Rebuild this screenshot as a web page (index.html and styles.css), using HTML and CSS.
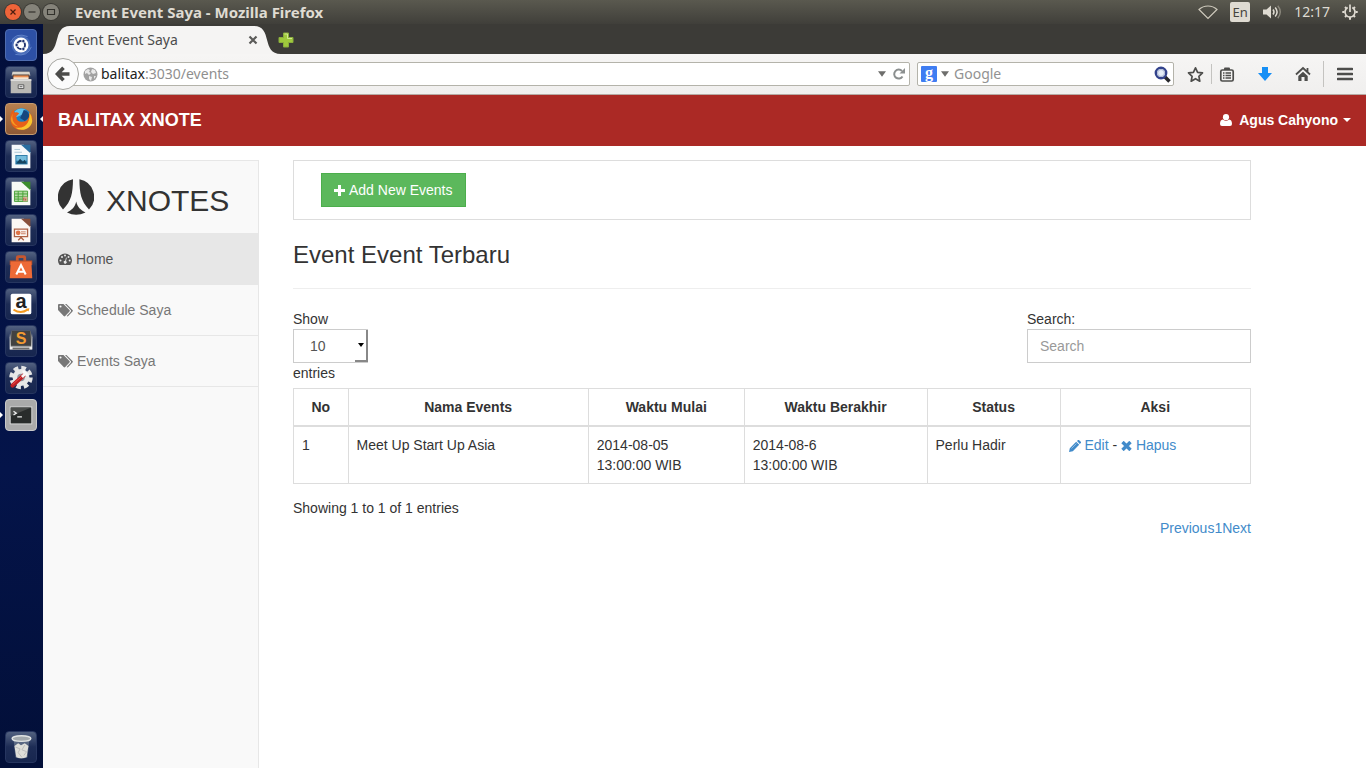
FILE: index.html
```html
<!DOCTYPE html>
<html lang="id">
<head>
<meta charset="utf-8">
<title>Event Event Saya</title>
<link rel="stylesheet" href="styles.css">
</head>
<body>
<div class="desktop">
  <header class="titlebar">
    <div class="window-controls">
      <button class="wc wc-close" aria-label="Close"><svg width="16" height="16" viewBox="0 0 16 16"><path d="M5.500 5.500l5 5m0-5l-5 5" stroke="#4a1d10" stroke-width="1.200"/></svg></button>
      <button class="wc" aria-label="Minimize"><svg width="16" height="16" viewBox="0 0 16 16"><path d="M4.500 8h7" stroke="#32312c" stroke-width="1.200"/></svg></button>
      <button class="wc" aria-label="Maximize"><svg width="16" height="16" viewBox="0 0 16 16"><path d="M4.500 5.500h7v5h-7z" fill="none" stroke="#32312c" stroke-width="1.100"/></svg></button>
    </div>
    <span class="window-title">Event Event Saya - Mozilla Firefox</span>
    <div class="indicators">
      <svg width="20" height="16" viewBox="0 0 20 16"><path d="M1 5.500C6 .8 14 .8 19 5.500L10 14.500z" fill="none" stroke="#cfcabd" stroke-width="1.200"/></svg>
      <span class="lang">En</span>
      <svg width="20" height="16" viewBox="0 0 20 16"><path d="M1 5.500h3.500L9 1.500v13l-4.500-4H1z" fill="#dfdbd2"/><path d="M11 5.500q2 2.500 0 5M13.200 3.500q3.800 4.500 0 9" fill="none" stroke="#dfdbd2" stroke-width="1.500"/><path d="M15.800 1.800q5 6.200 0 12.400" fill="none" stroke="#8a877c" stroke-width="1.400"/></svg>
      <span class="clock">12:17</span>
      <svg width="16" height="16" viewBox="0 0 16 16"><g fill="none" stroke="#dfdbd2"><path d="M5.700 3.600a5 5 0 1 0 4.600 0M8 .5V8" stroke-width="1.700"/><path d="M3 3l1.300 1.300M13 3l-1.300 1.300M.3 8h2.200M13.500 8h2.200M3 13l1.300-1.300M13 13l-1.300-1.300M8 13.300v2.400" stroke-width="2"/></g></svg>
    </div>
  </header>

  <div class="workspace">
    <nav class="launcher" aria-label="Launcher">
      <button class="app app-dash" aria-label="Dash"><svg viewBox="0 0 32 32"><circle cx="16" cy="16" r="10" fill="#8fb3e6" opacity=".3"/><path d="M5 13Q10 2 23 7M27 18Q23 29 10 26" fill="none" stroke="#9cbcf0" opacity=".5"/><circle cx="16" cy="16" r="8" fill="#fff"/><circle cx="16" cy="16" r="4.300" fill="none" stroke="#1f3370" stroke-width="2"/><g fill="#1f3370" stroke="#fff" stroke-width=".8"><circle cx="11.300" cy="16" r="1.800"/><circle cx="18.500" cy="11.800" r="1.800"/><circle cx="18.500" cy="20.200" r="1.800"/></g></svg></button>
      <button class="app" aria-label="Files"><svg viewBox="0 0 32 32"><path d="M7 5h18v5H7z" fill="#706b65"/><path d="M7 5h18l1 4H6z" fill="#d9d5cc"/><path d="M7 8h18v5H7z" fill="#513f36"/><path d="M8 9h16v3H8z" fill="#eb8f53"/><path d="M8 11h16v2H8z" fill="#f5e5d0"/><path d="M5 13h22v15H5z" fill="#bab9b5"/><path d="M5 13h22v2H5z" fill="#dedddb"/><path d="M13 19h6v4h-6z" fill="#eee" stroke="#555"/><path d="M14.500 21h3" stroke="#555"/></svg></button>
      <button class="app app-firefox" aria-label="Firefox"><svg viewBox="0 0 32 32"><circle cx="16.500" cy="15" r="10.500" fill="#1d7fc2"/><path d="M9 8q5-5 12-2l-3 5-7 3z" fill="#5ec2ed"/><path d="M19 6q6 2 6 8l-5 4-5-3 2-4z" fill="#15477f"/><path d="M5 10q1-3 3-4l1 3q3-1 5 1l-3 3q0 6 6 6 8 0 8-10 4 4 3 8c-1 13-21 15-23 1-1-4 0-7 0-8z" fill="#e76018"/><path d="M25 9q3 4 3 9c-1 9-12 12-18 7 12 2 16-7 15-16z" fill="#f9c52d"/><path d="M7 10q-2 9 6 14-7-1-8-8z" fill="#f49a22"/></svg><span class="run run-left"></span><span class="run run-right"></span></button>
      <button class="app" aria-label="Writer"><svg viewBox="0 0 32 32"><path d="M6 4h13l7 8v17H6z" fill="#f5f8fa"/><path d="M16 4h10v9z" fill="#286d9f"/><path d="M9 9h6M9 12h8" stroke="#a9c4d3"/><path d="M10 15h13v10H10z" fill="#2677a5"/><path d="M11 16h11v5H11z" fill="#75bddd"/><path d="M11 24l4-5 3 3 2-2 2 4z" fill="#17445f"/></svg></button>
      <button class="app" aria-label="Calc"><svg viewBox="0 0 32 32"><path d="M6 4h13l7 8v17H6z" fill="#f7faf5"/><path d="M16 4h10v9z" fill="#3c8d2d"/><path d="M9 14h14v11H9z" fill="#b6dca6"/><path d="M9 14h14v11H9zM9 17h14M9 20h14M9 22.500h14M13 14v11M18 14v11" fill="none" stroke="#45a034"/><path d="M18 20h5v5h-5z" fill="#d6b498"/><path d="M19 24v-3M21 24v-2" stroke="#a95335"/></svg></button>
      <button class="app" aria-label="Impress"><svg viewBox="0 0 32 32"><path d="M6 4h13l7 8v17H6z" fill="#fbf7f4"/><path d="M16 4h10v9z" fill="#89503c"/><path d="M9 15h14v8H9zM16 23v2M13 27l3-3 3 3" fill="none" stroke="#ae6044" stroke-width="1.400"/><circle cx="13" cy="19" r="2.500" fill="#df7448"/><path d="M16 18h5M16 20h5" stroke="#c87557"/></svg></button>
      <button class="app" aria-label="Software"><svg viewBox="0 0 32 32"><path d="M12 10V6q0-1 1-1h6q1 0 1 1v4" fill="none" stroke="#c7572f" stroke-width="3"/><path d="M4 9h24v5H4z" fill="#b34f2a"/><path d="M5 10h22l1 18H4z" fill="#ed6a37"/><path d="M11 24l5-10 5 10M12.500 21h7" fill="none" stroke="#fff" stroke-width="2.200"/></svg></button>
      <button class="app" aria-label="Amazon"><svg viewBox="0 0 32 32"><rect x="5" y="5" width="22" height="22" rx="2" fill="#fff"/><path d="M8 22q8 5 15 0" fill="none" stroke="#f59b22" stroke-width="2"/><path d="M21 21l4-.5-1 3.500z" fill="#f59b22"/></svg><span class="glyph glyph-a">a</span></button>
      <button class="app" aria-label="Sublime Text"><svg viewBox="0 0 32 32"><path d="M4 12l2-7h20l2 7v13H4z" fill="#898a8b"/><path d="M6 5h20l1 16H5z" fill="#414242"/><path d="M4 8l1 14h22l1-14v17H4z" fill="#ededed"/><path d="M7 23h18v2H7z" fill="#6c6c6c"/></svg><span class="glyph glyph-s">S</span></button>
      <button class="app" aria-label="System Settings"><svg viewBox="0 0 32 32"><circle cx="16" cy="15.500" r="10" fill="none" stroke="#e4e5e6" stroke-width="5" stroke-dasharray="4.800 3.050"/><circle cx="16" cy="15.500" r="9" fill="#e7e8e8"/><circle cx="16" cy="15.500" r="4" fill="#8e929c"/><path d="M7 24L19 13" stroke="#bf2024" stroke-width="4.500" stroke-linecap="round"/><path d="M17 15l5-5M19 8q0 4 5 5" fill="none" stroke="#f8f8f8" stroke-width="3"/><path d="M7 23l9-8" stroke="#ef5050"/></svg></button>
      <button class="app app-terminal" aria-label="Terminal"><svg viewBox="0 0 32 32"><path d="M4 7h24v19H4z" fill="#ddd"/><path d="M5 8h22v17H5z" fill="#292c2b"/><path d="M5 8h22l-22 9z" fill="#4b4d4b"/><path d="M8 12l3 2-3 2M12 18h5" fill="none" stroke="#eee" stroke-width="1.400"/></svg><span class="run run-left"></span></button>
      <button class="app app-trash" aria-label="Trash"><svg viewBox="0 0 32 32"><path d="M8 7l2 20q6 3 13 0l2-20z" fill="#8a95a6" opacity=".5"/><ellipse cx="16.500" cy="7" rx="10" ry="3" fill="#a3a9ad" stroke="#e0e3e3" stroke-width="1.500"/><path d="M9 15l4-3 3 2 4-2 4 3-1 5-1 7q-6 2-11 0l-1-6z" fill="#deded9"/><path d="M10 16l5 2-2 4 4 5m3-13l-3 5 5 2-3 4" fill="none" stroke="#bbb"/></svg></button>
    </nav>

    <div class="browser">
      <div class="tabstrip">
        <div class="tab">
          <svg class="tab-shape" viewBox="0 0 238 28" preserveAspectRatio="none"><path d="M0 28C20 28 8 0 27 0H211C230 0 218 28 238 28z" fill="#f5f4f3"/></svg>
          <span class="tab-title">Event Event Saya</span>
          <button class="plain tab-close" aria-label="Close tab"><svg width="10" height="10" viewBox="0 0 10 10"><path d="M1.500 1.500l7 7m0-7l-7 7" stroke="#5b5b59" stroke-width="2.200"/></svg></button>
        </div>
        <button class="plain new-tab" aria-label="New tab"><svg width="16" height="16" viewBox="0 0 16 16"><path d="M5.500 1h5v4.500H15v5h-4.500V15h-5v-4.500H1v-5h4.500z" fill="#9fc93c" stroke="#8aae3c"/><path d="M6.500 2h3v4.500H14" fill="none" stroke="#d2ea8e"/></svg></button>
      </div>
      <div class="toolbar">
        <button class="back" aria-label="Back"><svg width="18" height="16" viewBox="0 0 18 16"><path d="M9.500 1.800L3.500 8l6 6.200M4 8h11.500" fill="none" stroke="#4c4c4a" stroke-width="3.600"/></svg></button>
        <div class="urlbar">
          <svg width="15" height="15" viewBox="0 0 15 15"><circle cx="7.500" cy="7.500" r="7" fill="#a2a2a2"/><path d="M2 4l3-2 2 1-1 2 2 1-2 2-2-2-2 1zM9 2l3 1 1 3-3 1-2-2zM6 9l3 1-1 4-2-2zM11 9h2l-2 3z" fill="#e9e9e9"/></svg>
          <div class="url"><b>balitax</b>:3030/events</div>
          <svg width="8" height="6" viewBox="0 0 9 6"><path d="M0 0h9L4.500 6z" fill="#6e6e6c"/></svg>
          <button class="plain" aria-label="Reload"><svg width="12" height="12" viewBox="0 0 12 12"><path d="M9.500 8.500A4.500 4.500 0 1 1 9 3" fill="none" stroke="#8b8f8f" stroke-width="2"/><path d="M6.500 5.500H12V0z" fill="#8b8f8f"/></svg></button>
        </div>
        <form class="searchbar">
          <span class="google">g</span>
          <svg width="8" height="6" viewBox="0 0 9 6"><path d="M0 0h9L4.500 6z" fill="#6e6e6c"/></svg>
          <input class="search-field" type="text" placeholder="Google" aria-label="Google">
          <button class="plain" type="button" aria-label="Search web"><svg width="17" height="17" viewBox="0 0 17 17"><path d="M11 11l4.500 4.500" stroke="#27272b" stroke-width="3.500"/><circle cx="7" cy="7" r="5.200" fill="#e5edf7" stroke="#33438c" stroke-width="2.400"/><circle cx="7" cy="7" r="3.500" fill="none" stroke="#aab5d2"/></svg></button>
        </form>
        <div class="tools">
          <button class="plain" aria-label="Bookmark"><svg width="17" height="17" viewBox="0 0 17 17"><path d="M8.500 1.800l2.100 4.500 4.900.6-3.600 3.400.9 4.900-4.300-2.500-4.300 2.500.9-4.900-3.600-3.400 4.900-.6z" fill="none" stroke="#4d4d4b" stroke-width="1.700" stroke-linejoin="round"/></svg></button>
          <span class="rule rule-short"></span>
          <button class="plain" aria-label="Bookmarks list"><svg width="16" height="17" viewBox="0 0 16 17"><rect x="1.800" y="4" width="12.400" height="11" rx="1.500" fill="none" stroke="#4d4d4b" stroke-width="1.700"/><path d="M5 4V2.500Q5 1.500 6 1.500h4q1 0 1 1V4z" fill="#4d4d4b"/><path d="M4 7h1.500M6.500 7H12M4 9.500h1.500M6.500 9.500H12M4 12h1.500M6.500 12H12" stroke="#4d4d4b" stroke-width="1.300"/></svg></button>
          <button class="plain tool-download" aria-label="Downloads"><svg width="16" height="16" viewBox="0 0 16 16"><path d="M5 1h6v6h4l-7 8-7-8h4z" fill="#168ff5"/></svg></button>
          <button class="plain tool-home" aria-label="Home"><svg width="16" height="16" viewBox="0 0 16 16"><path d="M1 8.500L8 2l7 6.500M12.500 2v4" fill="none" stroke="#4d4d4b" stroke-width="1.800"/><path d="M3.300 10L8 5.800l4.700 4.200v5H9.500v-4h-3v4H3.300z" fill="#4d4d4b"/></svg></button>
          <span class="rule"></span>
          <button class="plain" aria-label="Menu"><svg width="16" height="14" viewBox="0 0 16 14"><path d="M1 2h14M1 7h14M1 12h14" stroke="#4d4d4b" stroke-width="2.600" stroke-linecap="round"/></svg></button>
        </div>
      </div>

      <div class="page">
        <header class="navbar">
          <a class="brand" href="#">BALITAX XNOTE</a>
          <button class="user">
            <svg width="12" height="12" viewBox="0 0 12 12"><circle cx="6" cy="3.200" r="3.100" fill="#fff"/><path d="M2.800 5.600q3.200 2.800 6.400 0Q12 6 12 10q0 2-2 2H2q-2 0-2-2 0-4 2.800-4.400z" fill="#fff"/></svg>
            <span>Agus Cahyono</span>
            <svg width="8" height="4" viewBox="0 0 8 4"><path d="M0 0h8L4 4z" fill="#fff"/></svg>
          </button>
        </header>
        <div class="columns">
          <aside class="sidebar">
            <h2 class="logo">
              <svg width="36" height="36" viewBox="0 0 36 36"><path d="M15 .2C14.800 14 13.500 22 5 30.500A18 18 0 0 1 15 .2zM21.400.2C21.500 14 23 22 31 30.500A18 18 0 0 0 21.400.2zM18.200 22.500C17 28 14 31 9 33.500q9 4.500 18.500 0C22.500 31 19.500 28 18.200 22.500z" fill="#333"/></svg>
              <span>XNOTES</span>
            </h2>
            <a class="side-link active" href="#"><svg width="14" height="12" viewBox="0 0 14 12"><path d="M1.300 11.500A7 7 0 1 1 12.700 11.500q-.2.500-.8.500H2.100q-.6 0-.8-.5z" fill="#555"/><g fill="#e7e7e7"><circle cx="2.500" cy="7.500" r="1"/><circle cx="4" cy="4" r="1"/><circle cx="7" cy="2.500" r="1"/><circle cx="10.500" cy="4" r="1"/><circle cx="11.700" cy="7.500" r="1"/><path d="M8 4.500l.8.200-.8 3.200A1.500 1.500 0 1 1 7.200 7.700z"/></g></svg><span>Home</span></a>
            <a class="side-link" href="#"><svg width="15" height="13" viewBox="0 0 15 13"><path d="M0 1q0-1 1-1h4.500l6 6q.7.700 0 1.400L7.200 12q-.8.800-1.500 0L0 6zM2.500 1.500a1 1 0 1 0 .1 2 1 1 0 0 0-.1-2z" fill="#777" fill-rule="evenodd"/><path d="M7 0h1.500l6 6q.7.700 0 1.400L10.200 12q-.8.800-1.500 0l4-4.300q.7-1 0-1.700z" fill="#777"/></svg><span>Schedule Saya</span></a>
            <a class="side-link" href="#"><svg width="15" height="13" viewBox="0 0 15 13"><path d="M0 1q0-1 1-1h4.500l6 6q.7.700 0 1.400L7.200 12q-.8.800-1.500 0L0 6zM2.500 1.500a1 1 0 1 0 .1 2 1 1 0 0 0-.1-2z" fill="#777" fill-rule="evenodd"/><path d="M7 0h1.500l6 6q.7.700 0 1.400L10.200 12q-.8.800-1.500 0l4-4.300q.7-1 0-1.700z" fill="#777"/></svg><span>Events Saya</span></a>
          </aside>
          <main class="content">
            <div class="actions">
              <button class="add"><svg width="11" height="11" viewBox="0 0 11 11"><path d="M5.500 0v11M0 5.500h11" stroke="#fff" stroke-width="3"/></svg><span>Add New Events</span></button>
            </div>
            <h3 class="heading">Event Event Terbaru</h3>
            <div class="filters">
              <div class="length">
                <label for="length">Show</label>
                <div class="select-wrap">
                  <select id="length" class="field length-select"><option>10</option><option>25</option></select>
                  <span class="select-arrow"><svg width="6" height="4" viewBox="0 0 6 4"><path d="M0 0h6L3 4z" fill="#000"/></svg></span>
                </div>
                <span>entries</span>
              </div>
              <div class="filter">
                <label for="filter">Search:</label>
                <input id="filter" class="field" type="text" placeholder="Search">
              </div>
            </div>
            <table class="events">
              <colgroup><col class="c-no"><col class="c-name"><col class="c-start"><col class="c-end"><col class="c-status"><col></colgroup>
              <thead><tr><th>No</th><th>Nama Events</th><th>Waktu Mulai</th><th>Waktu Berakhir</th><th>Status</th><th>Aksi</th></tr></thead>
              <tbody><tr>
                <td>1</td><td>Meet Up Start Up Asia</td><td>2014-08-05<br>13:00:00 WIB</td><td>2014-08-6<br>13:00:00 WIB</td><td>Perlu Hadir</td>
                <td><a href="#"><svg width="12" height="12" viewBox="0 0 12 12"><path d="M0 12l.8-3.800 6.400-6.400 3 3L3.800 11.200zM8 1l1-1q.6-.4 1.200.2l1.600 1.600q.5.600 0 1.200l-1 1z" fill="#428bca"/><path d="M2.500 8.500L7.500 3.500" stroke="#a5cae9" stroke-width=".8"/></svg> Edit</a> - <a href="#"><svg class="times" width="11" height="10" viewBox="0 0 11 10"><path d="M1.500 1l8 8m0-8l-8 8" stroke="#428bca" stroke-width="3.400"/></svg> Hapus</a></td>
              </tr></tbody>
            </table>
            <div class="info">Showing 1 to 1 of 1 entries</div>
            <nav class="pager" aria-label="Pages"><a href="#">Previous</a><a href="#">1</a><a href="#">Next</a></nav>
          </main>
        </div>
      </div>
    </div>
  </div>
</div>
</body>
</html>
```
FILE: styles.css
```css
* { box-sizing: border-box; }
html, body { margin: 0; height: 100%; }
body { font: 14px/20px "Liberation Sans", Arial, sans-serif; color: #333; overflow: hidden; }
a { color: #428bca; text-decoration: none; }
button { font: inherit; cursor: pointer; }
svg { flex: none; }
.desktop { min-height: 100vh; display: flex; flex-direction: column; background: #fff; }

.titlebar { height: 24px; display: flex; align-items: center; padding: 0 8px 0 5px; background: linear-gradient(#5a594f, #403f3a); color: #dfdbd2; font-family: "Noto Sans", "Open Sans", sans-serif; }
.window-controls { display: flex; gap: 3px; }
.wc { width: 16px; height: 16px; padding: 0; border: 0; border-radius: 50%; background: #85837a; display: flex; box-shadow: 0 0 0 1px #3a3934; }
.wc-close { background: #ee6439; }
.window-title { flex: 1; margin-left: 16px; font-size: 15px; font-weight: bold; }
.indicators { display: flex; align-items: center; gap: 12px; font-size: 14px; }
.lang { background: #dfdbd2; color: #45443e; border-radius: 2px; width: 20px; line-height: 20px; text-align: center; font-size: 13px; }

.workspace { flex: 1; display: flex; }
.launcher { width: 43px; padding: 5px; display: flex; flex-direction: column; gap: 5px; background: linear-gradient(#030f3b, #04144a 60%, #020f38); }
.app { position: relative; width: 32px; height: 32px; padding: 0; border: 1px solid #26355f; border-radius: 4px; background: linear-gradient(#526180, #1d2c55 50%, #17264f); }
.app svg { display: block; width: 30px; height: 30px; }
.app-dash { background: #2d50a5; border-color: #4e6cb0; }
.app-firefox { background: linear-gradient(#b7804f, #8e5936); border-color: #c49a6f; }
.app-terminal { background: #aaa; border-color: #c9c9c9; }
.app-trash { margin-top: auto; }
.glyph { position: absolute; inset: 0; text-align: center; font-weight: bold; }
.glyph-a { color: #222; font-size: 20px; line-height: 24px; }
.glyph-s { color: #f39b32; font-size: 16px; line-height: 25px; }
.run { position: absolute; top: 12px; border: 3px solid transparent; }
.run-left { left: -6px; border-left-color: #fff; border-right: 0; }
.run-right { right: -7px; border-right-color: #fff; border-left: 0; }

.browser { flex: 1; min-width: 0; display: flex; flex-direction: column; }
.plain { border: 0; padding: 0; background: none; display: flex; }
.tabstrip { height: 30px; background: #3c3b37; display: flex; align-items: flex-end; font-family: "Noto Sans", "Open Sans", sans-serif; }
.tab { position: relative; width: 238px; height: 28px; padding: 0 23px 0 24px; display: flex; align-items: center; justify-content: space-between; color: #4c4c4c; }
.tab-shape { position: absolute; inset: 0; width: 100%; height: 100%; }
.tab-title, .tab-close { position: relative; }
.new-tab { align-self: center; margin: 2px 0 0 -3px; }

.toolbar { height: 41px; padding: 0 13px 0 4px; display: flex; align-items: center; background: linear-gradient(#f6f5f4, #f0efee); border-bottom: 1px solid #b6aaa4; font-family: "Noto Sans", "Open Sans", sans-serif; }
.back { position: relative; z-index: 1; width: 32px; height: 32px; padding: 0; border: 1px solid #a5a5a0; border-radius: 50%; background: #fbfbfb; display: flex; align-items: center; justify-content: center; }
.urlbar, .searchbar { height: 24px; display: flex; align-items: center; background: #fff; border: 1px solid #b4b3aa; border-radius: 2px; }
.urlbar { flex: 1; margin-left: -8px; padding: 0 4px 0 11px; gap: 3px; color: #8f8f8f; }
.url { flex: 1; margin-right: 4px; }
.url b { color: #222; font-weight: normal; }
.urlbar .plain { margin-left: 4px; }
.searchbar { width: 257px; margin-left: 7px; padding: 0 2px 0 3px; gap: 4px; }
.google { width: 16px; height: 16px; background: #3f7df2; color: #fff; border-radius: 1px; text-align: center; font: bold 16px/13px "Liberation Serif", serif; }
.search-field { flex: 1; min-width: 0; border: 0; padding: 0 0 0 1px; outline: 0; font: inherit; background: none; }
.search-field::placeholder { color: #929292; opacity: 1; }
.tools { display: flex; align-items: center; margin-left: 13px; gap: 7px; }
.rule { width: 1px; height: 26px; background: #c4c3c0; margin: 0 6px 0 5px; }
.rule-short { height: 20px; margin: 0; }
.tool-download, .tool-home { margin-left: 15px; }

.page { flex: 1; display: flex; flex-direction: column; background: #fff; }
.navbar { height: 51px; padding: 0 15px 2px; display: flex; align-items: center; justify-content: space-between; background: #ab2925; font-weight: bold; }
.brand { color: #fff; font-size: 18px; }
.user { display: flex; align-items: center; gap: 5px; border: 0; padding: 0; background: none; color: #fff; }
.user span { margin-left: 2px; }
.columns { flex: 1; display: flex; margin-top: 14px; }
.sidebar { width: 216px; background: #f9f9f9; border: 1px solid #e7e7e7; border-width: 1px 1px 0 0; }
.logo { margin: 0; height: 72px; padding: 0 15px; display: flex; align-items: center; gap: 12px; font-size: 30px; font-weight: normal; }
.logo span { padding-top: 8px; }
.side-link { display: flex; align-items: center; gap: 4px; padding: 15px; border-bottom: 1px solid #e7e7e7; color: #777; }
.side-link.active { background: #e7e7e7; color: #555; padding-top: 16px; }
.content { flex: 1; margin: 0 115px 0 34px; }
.actions { border: 1px solid #ddd; padding: 12px 27px; height: 60px; }
.add { height: 34px; padding: 0 12px; display: flex; align-items: center; gap: 4px; color: #fff; background: #5cb85c; border: 1px solid #4cae4c; }
.heading { margin: 20px 0; padding-bottom: 18px; border-bottom: 1px solid #eee; font-size: 24px; line-height: 30px; font-weight: normal; }
.filters { display: flex; justify-content: space-between; align-items: flex-start; margin-bottom: 5px; }
.length, .filter { display: flex; flex-direction: column; }
.filter { width: 224px; }
.field { width: 100%; height: 34px; padding: 0 12px; border: 1px solid #ccc; border-radius: 0; background: #fff; color: #555; font: inherit; }
.field::placeholder { color: #999; opacity: 1; }
.select-wrap { position: relative; width: 75px; }
.select-wrap, .field { display: block; }
.length-select { appearance: none; padding-left: 16px; }
.select-arrow { position: absolute; top: 1px; right: 0; bottom: 1px; width: 13px; display: flex; align-items: center; justify-content: center; border: solid #888; border-width: 0 2px 2px 0; pointer-events: none; }
.events { width: 100%; table-layout: fixed; border-collapse: collapse; border: 1px solid #ddd; }
.events th, .events td { border: 1px solid #ddd; padding: 8px; text-align: left; vertical-align: top; }
.events th { text-align: center; border-bottom-width: 2px; }
.events td svg { vertical-align: -2px; }
.events td .times { vertical-align: -1px; }
.c-no { width: 5.7%; }
.c-name { width: 25.1%; }
.c-start { width: 16.3%; }
.c-end { width: 19.1%; }
.c-status { width: 13.9%; }
.info { margin-top: 14px; }
.pager { display: flex; justify-content: flex-end; }
```
